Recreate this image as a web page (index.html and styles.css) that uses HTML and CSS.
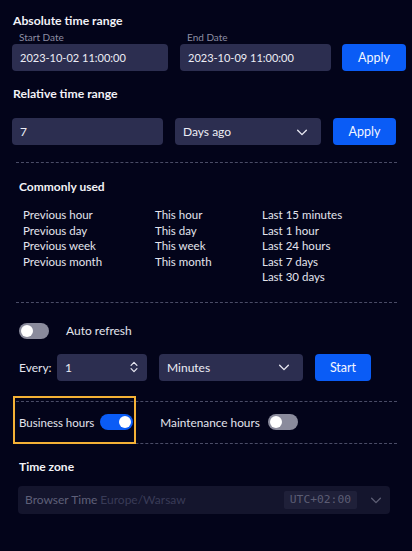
FILE: index.html
```html
<!DOCTYPE html>
<html lang="en">
<head>
<meta charset="utf-8">
<link rel="stylesheet" href="styles.css">
</head>
<body>
<div class="panel">
  <section class="abs">
    <h2 class="title">Absolute time range</h2>
    <div class="row abs-row">
      <div class="field start">
        <label class="flabel">Start Date</label>
        <div class="input date">2023-10-02 11:00:00</div>
      </div>
      <div class="field end">
        <label class="flabel">End Date</label>
        <div class="input date">2023-10-09 11:00:00</div>
      </div>
      <button class="btn apply1">Apply</button>
    </div>
  </section>

  <section class="rel">
    <h2 class="title">Relative time range</h2>
    <div class="row rel-row">
      <div class="input num7">7</div>
      <div class="input select days">Days ago
        <svg class="chev" viewBox="0 0 16 16" width="14" height="14"><path d="M3 6l5 5 5-5" fill="none" stroke="#e6e6f0" stroke-width="1.6" stroke-linecap="round" stroke-linejoin="round"/></svg>
      </div>
      <button class="btn apply2">Apply</button>
    </div>
  </section>

  <section class="common dashed-top">
    <h3 class="subtitle">Commonly used</h3>
    <div class="cols">
      <ul class="col c1">
        <li>Previous hour</li><li>Previous day</li><li>Previous week</li><li>Previous month</li>
      </ul>
      <ul class="col c2">
        <li>This hour</li><li>This day</li><li>This week</li><li>This month</li>
      </ul>
      <ul class="col c3">
        <li>Last 15 minutes</li><li>Last 1 hour</li><li>Last 24 hours</li><li>Last 7 days</li><li>Last 30 days</li>
      </ul>
    </div>
  </section>

  <section class="refresh dashed-top">
    <div class="toggle-row">
      <span class="switch off"><span class="knob"></span></span>
      <span class="tlabel">Auto refresh</span>
    </div>
    <div class="every-row">
      <span class="every">Every:</span>
      <div class="input num1">1
        <svg class="stepper" viewBox="0 0 12 18" width="10" height="16"><path d="M2.5 7l3.5-3.5L9.5 7M2.5 11l3.5 3.5 3.5-3.5" fill="none" stroke="#e6e6f0" stroke-width="1.5" stroke-linecap="round" stroke-linejoin="round"/></svg>
      </div>
      <div class="input select minutes">Minutes
        <svg class="chev" viewBox="0 0 16 16" width="14" height="14"><path d="M3 6l5 5 5-5" fill="none" stroke="#e6e6f0" stroke-width="1.6" stroke-linecap="round" stroke-linejoin="round"/></svg>
      </div>
      <button class="btn start-btn">Start</button>
    </div>
  </section>

  <section class="hours dashed-top dashed-bottom">
    <div class="hour-item business">
      <span class="hlabel">Business hours</span>
      <span class="switch on"><span class="knob"></span></span>
      <span class="highlight"></span>
    </div>
    <div class="hour-item maint">
      <span class="hlabel">Maintenance hours</span>
      <span class="switch off"><span class="knob"></span></span>
    </div>
  </section>

  <section class="tz">
    <h3 class="subtitle">Time zone</h3>
    <div class="tz-select">
      <span class="tz-name">Browser Time</span>
      <span class="tz-zone">Europe/Warsaw</span>
      <span class="tz-badge">UTC+02:00</span>
      <svg class="tz-chev" viewBox="0 0 16 16" width="14" height="14"><path d="M3 6l5 5 5-5" fill="none" stroke="#5c5d73" stroke-width="1.6" stroke-linecap="round" stroke-linejoin="round"/></svg>
    </div>
  </section>
</div>
</body>
</html>
```

FILE: styles.css
```css
* { box-sizing: border-box; }
html, body { margin: 0; padding: 0; }
body {
  background: #03041a;
  color: #e8e8f0;
  font-family: Lato, "Noto Sans", sans-serif;
  font-size: 12px;
  width: 412px;
  height: 551px;
  overflow: hidden;
}
.panel { padding: 12px 0 0 12px; width: 412px; }

.title {
  margin: 0 0 0 1px;
  font-size: 12.2px;
  font-weight: 700;
  line-height: 18px;
  color: #f2f2f7;
}
.row { display: flex; align-items: flex-end; }

.field { display: flex; flex-direction: column; }
.flabel {
  font-size: 10px;
  line-height: 14px;
  color: #8d8ea3;
  padding-left: 7px;
}
.start { width: 156px; }
.end { width: 151px; margin-left: 12px; }

.input {
  height: 27px;
  background: #2c2e50;
  border-radius: 4px;
  color: #ecedf5;
  font-size: 12px;
  line-height: 27px;
  padding-left: 8px;
  display: flex;
  align-items: center;
}
.input.date { font-size: 11px; }

.btn {
  height: 27px;
  border: 0;
  border-radius: 4px;
  background: #0a5cf6;
  color: #f4f6ff;
  font-family: Lato, "Noto Sans", sans-serif;
  font-size: 12.5px;
  padding: 0;
}
.apply1 { width: 64px; margin-left: 11px; }

.rel { margin-top: 14px; }
.rel-row { margin-top: 15px; }
.num7 { width: 151px; }
.days { width: 146px; margin-left: 12px; }
.apply2 { width: 63px; margin-left: 12px; }
.select { justify-content: space-between; padding-right: 12px; }
.chev { display: block; }

.dashed-top { border-top: 1px dashed #4a4c66; }
.dashed-bottom { border-bottom: 1px dashed #4a4c66; }

.common {
  margin: 17px 15px 0 4px;
  padding: 17px 0 0 3px;
}
.subtitle {
  margin: 0;
  font-size: 12px;
  font-weight: 700;
  line-height: 14px;
  color: #f2f2f7;
}
.cols {
  display: grid;
  grid-template-columns: 132px 107px 1fr;
  padding: 13px 0 17px 4px;
}
.col { list-style: none; margin: 0; padding: 0; }
.col li { font-size: 11.5px; height: 15.5px; line-height: 15.5px; color: #e4e4ee; }

.refresh {
  margin: 0 15px 0 4px;
  padding: 20px 0 20px 3px;
}
.toggle-row { display: flex; align-items: center; }
.switch {
  display: inline-flex;
  align-items: center;
  width: 30px;
  height: 16px;
  border-radius: 8px;
  background: #8a8b9c;
  padding: 2px;
  flex-shrink: 0;
}
.switch .knob {
  width: 12px; height: 12px; border-radius: 50%; background: #fff;
}
.switch.on { background: #0a5cf6; justify-content: flex-end; width: 33px; }
.tlabel { margin-left: 17px; font-size: 12px; color: #e4e4ee; }

.every-row { display: flex; align-items: center; margin-top: 15px; }
.every { width: 38px; font-size: 12px; color: #e4e4ee; }
.num1 { width: 90px; justify-content: space-between; padding-right: 8px; }
.minutes { width: 144px; margin-left: 12px; }
.start-btn { width: 56px; margin-left: 12px; }

.hours {
  margin: 0 15px 0 4px;
  height: 43px;
  display: flex;
  align-items: center;
  padding-left: 3px;
}
.hour-item { display: flex; align-items: center; position: relative; }
.hlabel { font-size: 11.5px; color: #e4e4ee; margin-right: 6px; }
.maint { margin-left: 27px; }
.maint .hlabel { font-size: 11.8px; margin-right: 8px; }
.highlight {
  position: absolute;
  left: -6px;
  right: -3px;
  top: -18px;
  bottom: -14px;
  border: 2.5px solid #f4b136;
  pointer-events: none;
}

.tz { margin: 0 0 0 4px; padding: 16px 0 0 3px; }
.tz-select {
  margin-top: 12px;
  margin-left: -1px;
  width: 372px;
  height: 28px;
  background: #14152d;
  border-radius: 4px;
  display: flex;
  align-items: center;
  padding: 0 7px 0 7px;
  font-size: 12px;
}
.tz-name { color: #5f6079; }
.tz-zone { color: #393b57; margin-left: 3px; }
.tz-badge {
  margin-left: auto;
  background: #1f2039;
  color: #5c5d74;
  font-family: "DejaVu Sans Mono", "Liberation Mono", monospace;
  font-size: 11.3px;
  height: 18px;
  line-height: 18px;
  padding: 0 6px;
  border-radius: 2px;
}
.tz-chev { margin-left: 12px; }
```
